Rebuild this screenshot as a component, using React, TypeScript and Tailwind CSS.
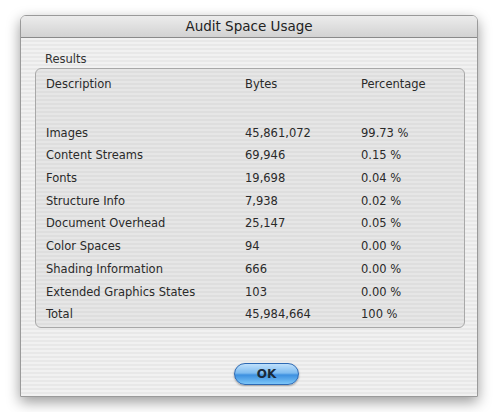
const ROWS = [
  ["Images", "45,861,072", "99.73 %"],
  ["Content Streams", "69,946", "0.15 %"],
  ["Fonts", "19,698", "0.04 %"],
  ["Structure Info", "7,938", "0.02 %"],
  ["Document Overhead", "25,147", "0.05 %"],
  ["Color Spaces", "94", "0.00 %"],
  ["Shading Information", "666", "0.00 %"],
  ["Extended Graphics States", "103", "0.00 %"],
  ["Total", "45,984,664", "100 %"],
];

export default function App() {
  return (
    <div className="h-[412px] w-[500px] bg-white pl-[20px] pt-[15px] font-['DejaVu_Sans',sans-serif] text-[#2a2a2a]">
      <div className="flex h-[382px] w-[458px] flex-col overflow-hidden rounded-t-[6px] border border-[#9a9a9a] shadow-[0_5px_14px_rgba(0,0,0,0.4)]">
        <div className="flex h-[22px] shrink-0 items-center justify-center border-b border-[#8a8a8a] bg-[linear-gradient(#ececec,#d2d2d2)] text-[13.5px] text-[#222]">
          Audit Space Usage
        </div>
        <div className="flex flex-1 flex-col bg-[repeating-linear-gradient(0deg,#f1f1f1_0px,#f1f1f1_2px,#e8e8e8_2px,#e8e8e8_4px)] pl-[14px] pr-[12px]">
          <div className="pl-[10px] pt-[14px] text-[11.5px] leading-[14px] text-[#333]">Results</div>
          <div className="mt-[2px] h-[260px] rounded-[6px] border border-[#a8a8a8] bg-[repeating-linear-gradient(0deg,#e6e6e6_0px,#e6e6e6_2px,#dedede_2px,#dedede_4px)] pl-[10px] pt-[7px] text-[11.5px]">
            <div className="grid h-[17px] grid-cols-[199px_116px_1fr] items-center">
              <span>Description</span>
              <span>Bytes</span>
              <span>Percentage</span>
            </div>
            <div className="mt-[29px] flex flex-col">
              {ROWS.map(([d, b, p]) => (
                <div key={d} className="grid h-[22.7px] grid-cols-[199px_116px_1fr] items-center">
                  <span>{d}</span>
                  <span>{b}</span>
                  <span>{p}</span>
                </div>
              ))}
            </div>
          </div>
          <div className="pl-[199px] pt-[35px]">
            <button className="flex h-[22px] w-[65px] items-center justify-center rounded-full border border-[#2d69b3] bg-[linear-gradient(#bfe0fb_0%,#7fbcf0_45%,#3d90e0_55%,#7cc6f8_100%)] text-[12px] font-bold text-[#1a2a3a] shadow-[0_1px_2px_rgba(0,0,0,0.35)]">
              OK
            </button>
          </div>
        </div>
      </div>
    </div>
  );
}
